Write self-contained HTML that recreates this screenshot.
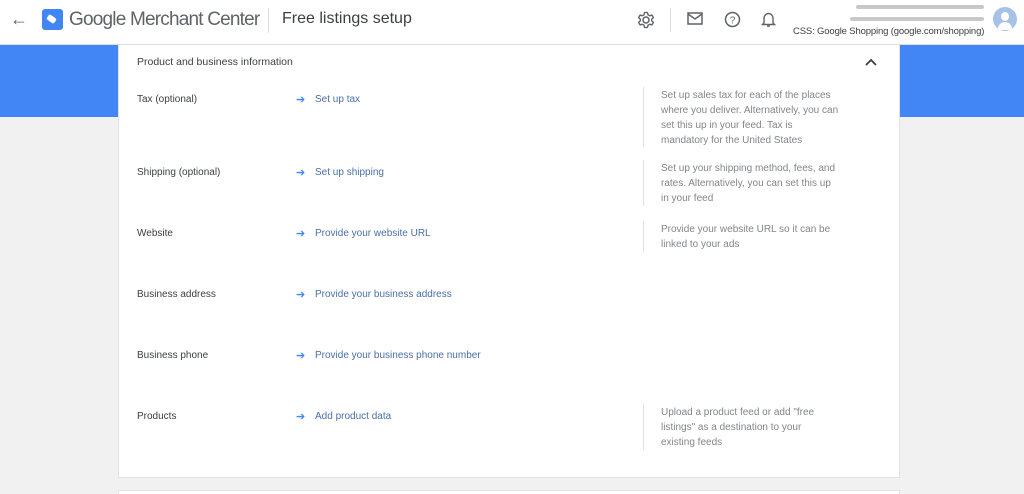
<!DOCTYPE html>
<html><head><style>
html,body{margin:0;width:1024px;height:494px;overflow:hidden}
body{background:#f1f1f1;font-family:"Liberation Sans",Arial,sans-serif;position:relative}
.hdr{position:absolute;left:0;top:0;width:1024px;height:44px;background:#fff;border-bottom:1px solid #ddd}
.band{position:absolute;left:0;top:45px;width:1024px;height:72px;background:#4285f4}
.card{position:absolute;left:118px;top:45px;width:780px;height:432px;background:#fff;border:1px solid #e2e2e2;border-top:none}
.card2{position:absolute;left:118px;top:490px;width:780px;height:20px;background:#fff;border:1px solid #e2e2e2}
.t{position:absolute;font-size:10px;color:#3c4043;white-space:nowrap}
.l{position:absolute;font-size:10px;color:#4a6fa5;white-space:nowrap}
.ar{position:absolute;color:#4285f4;font-size:11px}
.d{position:absolute;left:661px;font-size:10px;line-height:15px;color:#80868b;width:180px}
.v{position:absolute;left:643px;width:1px;background:#e0e0e0}
</style></head><body>
<div class="hdr">
<div style="position:absolute;left:10px;top:9px;font-size:18px;color:#5f6368">←</div>
<div style="position:absolute;left:42px;top:9px;width:21px;height:21px;background:#4285f4;border-radius:3px"><div style="position:absolute;left:5px;top:7px;width:9px;height:6px;background:#fff;border-radius:2px;transform:rotate(35deg)"></div></div>
<div style="position:absolute;left:69px;top:9px;font-size:19px;color:#5f6368;letter-spacing:-0.8px">Google Merchant Center</div>
<div style="position:absolute;left:268px;top:8px;width:1px;height:25px;background:#ddd"></div>
<div style="position:absolute;left:282px;top:10px;font-size:16px;color:#3c4043">Free listings setup</div>
<svg style="position:absolute;left:637px;top:11px" width="18" height="18" viewBox="0 0 24 24"><path d="M12 8a4 4 0 1 0 0 8a4 4 0 1 0 0-8z" fill="none" stroke="#5f6368" stroke-width="2"/><path d="M10 2h4l.6 3 2.4 1.4 2.9-1 2 3.4-2.3 2v2.4l2.3 2-2 3.4-2.9-1L14.6 19 14 22h-4l-.6-3L7 17.6l-2.9 1-2-3.4 2.3-2v-2.4l-2.3-2 2-3.4 2.9 1L9.4 5z" fill="none" stroke="#5f6368" stroke-width="1.8" stroke-linejoin="round"/></svg>
<div style="position:absolute;left:670px;top:8px;width:1px;height:24px;background:#ddd"></div>
<svg style="position:absolute;left:687px;top:12px" width="16" height="14"><rect x="1" y="1" width="14" height="11" fill="none" stroke="#5f6368" stroke-width="1.5"/><path d="M1 2 L8 7 L15 2" fill="none" stroke="#5f6368" stroke-width="1.5"/></svg>
<svg style="position:absolute;left:724px;top:11px" width="17" height="17"><circle cx="8.5" cy="8.5" r="7" fill="none" stroke="#5f6368" stroke-width="1.5"/><text x="8.5" y="12.5" font-size="10" text-anchor="middle" fill="#5f6368" font-family="Liberation Sans">?</text></svg>
<svg style="position:absolute;left:761px;top:11px" width="15" height="17"><path d="M3 12 V7 a4.5 4.5 0 0 1 9 0 V12 L13.5 13.5 H1.5 Z" fill="none" stroke="#5f6368" stroke-width="1.4"/><path d="M6 15 h3" stroke="#5f6368" stroke-width="1.5"/></svg>
<div style="position:absolute;left:856px;top:5px;width:128px;height:4px;background:#c8c8c8;border-radius:2px"></div>
<div style="position:absolute;left:850px;top:17px;width:134px;height:4px;background:#c8c8c8;border-radius:2px"></div>
<div style="position:absolute;left:793px;top:26px;font-size:9.5px;color:#3c4043;letter-spacing:-0.15px">CSS: Google Shopping (google.com/shopping)</div>
<div style="position:absolute;left:993px;top:7px;width:24px;height:24px;border-radius:50%;background:#a7c2e8;overflow:hidden"><div style="position:absolute;left:8px;top:5px;width:8px;height:9px;border-radius:50%;background:#fff"></div><div style="position:absolute;left:5px;top:15px;width:14px;height:8px;border-radius:7px 7px 0 0;background:#fff"></div></div>
</div>
<div class="band"></div>
<div class="card"></div>
<div class="card2"></div>
<div class="t" style="left:137px;top:56px;font-size:10.5px">Product and business information</div>
<svg style="position:absolute;left:864px;top:57px" width="14" height="10"><path d="M2 8 L7 3 L12 8" fill="none" stroke="#3c4043" stroke-width="1.8"/></svg>

<div class="t" style="left:137px;top:94px">Tax (optional)</div>
<div class="ar" style="left:296px;top:93px">➔</div><div class="l" style="left:315px;top:94px">Set up tax</div>
<div class="v" style="top:87px;height:60px"></div>
<div class="d" style="top:88px">Set up sales tax for each of the places where you deliver. Alternatively, you can set this up in your feed. Tax is mandatory for the United States</div>

<div class="t" style="left:137px;top:167px">Shipping (optional)</div>
<div class="ar" style="left:296px;top:166px">➔</div><div class="l" style="left:315px;top:167px">Set up shipping</div>
<div class="v" style="top:160px;height:46px"></div>
<div class="d" style="top:161px">Set up your shipping method, fees, and rates. Alternatively, you can set this up in your feed</div>

<div class="t" style="left:137px;top:228px">Website</div>
<div class="ar" style="left:296px;top:227px">➔</div><div class="l" style="left:315px;top:228px">Provide your website URL</div>
<div class="v" style="top:221px;height:31px"></div>
<div class="d" style="top:222px">Provide your website URL so it can be linked to your ads</div>

<div class="t" style="left:137px;top:289px">Business address</div>
<div class="ar" style="left:296px;top:288px">➔</div><div class="l" style="left:315px;top:289px">Provide your business address</div>

<div class="t" style="left:137px;top:350px">Business phone</div>
<div class="ar" style="left:296px;top:349px">➔</div><div class="l" style="left:315px;top:350px">Provide your business phone number</div>

<div class="t" style="left:137px;top:411px">Products</div>
<div class="ar" style="left:296px;top:410px">➔</div><div class="l" style="left:315px;top:411px">Add product data</div>
<div class="v" style="top:404px;height:46px"></div>
<div class="d" style="top:405px;width:160px">Upload a product feed or add "free listings" as a destination to your existing feeds</div>
</body></html>
